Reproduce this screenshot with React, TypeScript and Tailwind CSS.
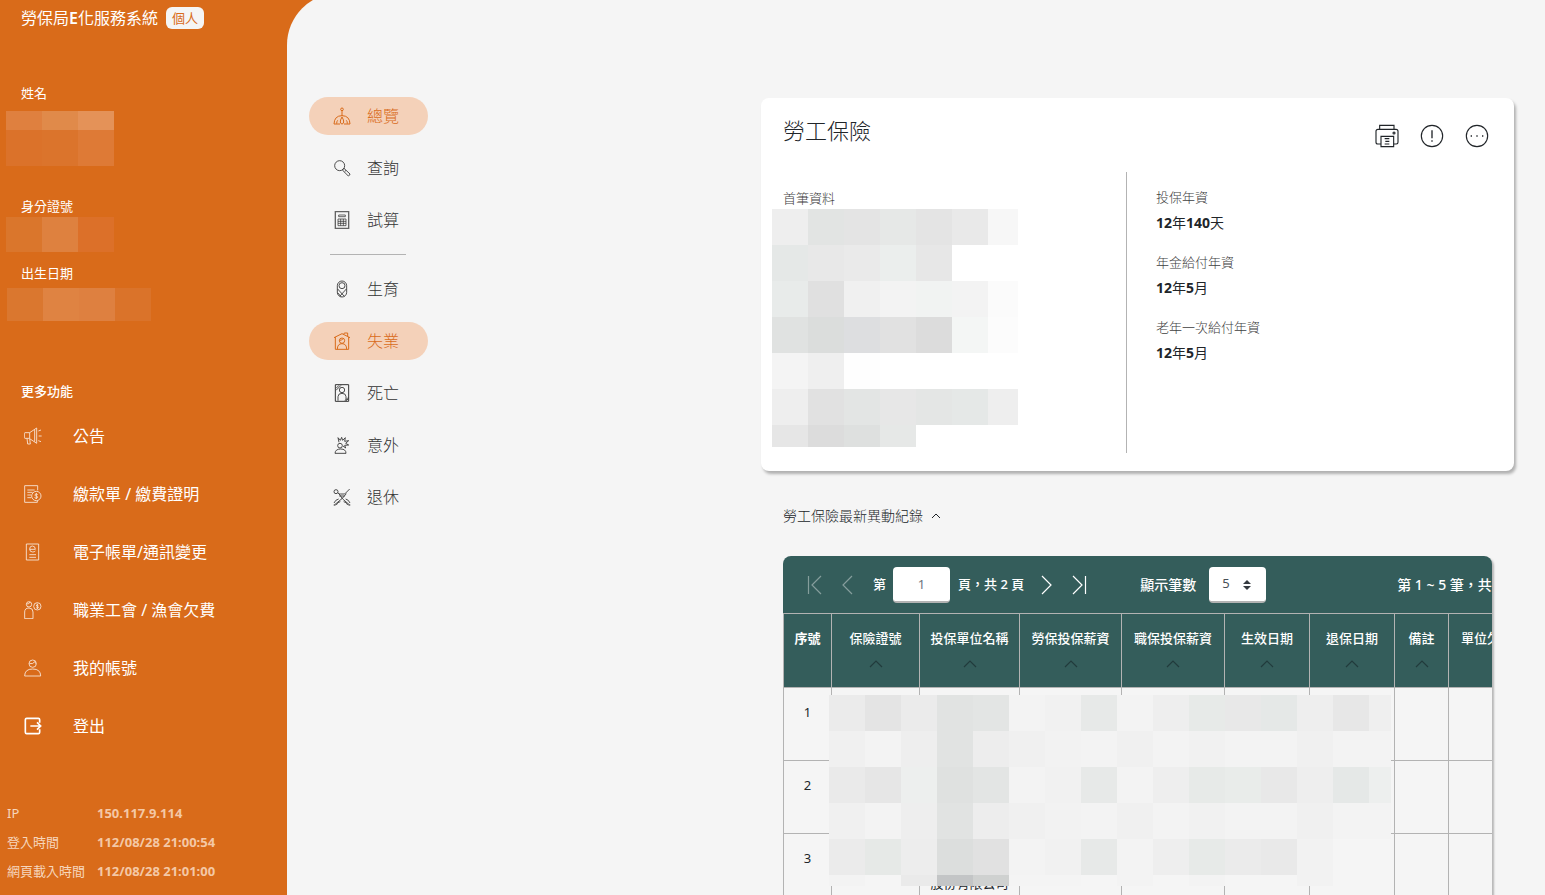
import type { ReactNode } from "react";

interface IconProps {
  children: ReactNode;
  width?: number;
}

// 線條圖示共用外框
function LineIcon({ children, width = 2.6 }: IconProps) {
  return (
    <svg
      viewBox="0 0 54 54"
      className="size-[18px] shrink-0"
      fill="none"
      stroke="currentColor"
      strokeWidth={width}
      aria-hidden="true"
    >
      {children}
    </svg>
  );
}

interface MosaicProps {
  rows: string[];
  className: string;
}

// 個資遮罩，每格 36px，顏色以空白分隔
function Mosaic({ rows, className }: MosaicProps) {
  return (
    <div className={`flex flex-col overflow-hidden ${className}`}>
      {rows.map((row, i) => (
        <div key={i} className="flex h-9 shrink-0">
          {row.split(" ").map((color, j) => (
            <div key={j} className="w-9 shrink-0" style={{ backgroundColor: `#${color}` }} />
          ))}
        </div>
      ))}
    </div>
  );
}

const NAME_MASK = ["df803f e08a4a e49258", "db722a db742c de7a36"];
const ID_MASK = ["da762c de813f dc7029"];
const BIRTH_MASK = ["da772f df8342 de8040 da732a"];

const CARD_MASK = [
  "eeeeee e2e4e3 e4e4e4 e6e8e7 e4e4e4 e9e9e9 f7f7f7",
  "e5e8e7 e8e8e8 eaeaea ebeeed e7e7e7 ffffff ffffff",
  "e8ebea e0e0e0 f0f0f0 f3f3f3 f1f3f2 f3f3f3 fbfbfb",
  "e0e2e1 dbdddc dddee0 e1e1e1 dcdcdc f4f6f5 fcfcfc",
  "f4f4f4 efefef fefefe ffffff ffffff ffffff ffffff",
  "eeeeee e1e1e1 e3e5e4 e7e7e7 e4e6e5 e5e8e7 eeeeee",
  "e6e6e6 dcdcdc dee0df e6e8e7 ffffff ffffff ffffff",
];

const TABLE_MASK = [
  "ebebeb e4e4e4 ebebeb e1e3e2 e3e5e4 f3f3f3 f1f1f1 e7e9e8 f3f3f3 eeeeee e7eae8 e8e8e8 e5e8e7 eeeeee e7e7e7 efefef",
  "f0f0f0 f3f3f3 eeeeee e1e3e2 ededed f0f0f0 f2f2f2 f3f3f3 f0f0f0 f3f3f3 f1f1f1 f3f3f3 f3f3f3 f0f0f0 f3f3f3 f3f3f3",
  "eaeaea e6e6e6 edefee dfe1e0 e3e5e4 f3f3f3 f1f1f1 e7e9e8 f3f3f3 eeeeee e7eae8 e9ecea e8e8e8 eeeeee e5e8e7 edefee",
  "f0f0f0 f3f3f3 eeeeee e1e3e2 ededed f0f0f0 f2f2f2 f3f3f3 f0f0f0 f3f3f3 f1f1f1 f3f3f3 f3f3f3 f0f0f0 f3f3f3 f3f3f3",
  "ebebeb e6e9e7 ededed dcdedd e1e1e1 f3f3f3 f1f1f1 e7e9e8 f3f3f3 eeeeee e7eae8 ebebeb e9e9e9 f2f2f2 f5f5f5 f5f5f5",
  "f3f3f3 f5f5f5 eaeaea c3c5c6 cfd1d0 f4f4f4 f4f4f4 f5f5f5 f3f3f3 f5f5f5 f3f3f3 f5f5f5 f5f5f5 f2f2f2 f5f5f5 f5f5f5",
];

const MORE_LINKS: { label: string; icon: ReactNode }[] = [
  {
    label: "公告",
    icon: (
      <LineIcon>
        <path d="M17 17H3q-2 0-2 3v11q0 3 2 3h14zM17 17 38 3v46L17 35M32 8v36M9 34l2 17h8l-2-16M43 12l8-3M44 27h9M43 41l8 3" />
      </LineIcon>
    ),
  },
  {
    label: "繳款單 / 繳費證明",
    icon: (
      <LineIcon>
        <path d="M41 16V2H2v50h38v-4M10 15h22M10 22h16M10 30h11M10 38h12" />
        <circle cx="37" cy="33" r="14" />
        <path d="M41 29q-2-3-5-2-4 1-3 4 1 2 4 2 4 1 4 4-1 3-5 3-3 0-4-3M37 24v18" />
      </LineIcon>
    ),
  },
  {
    label: "電子帳單/通訊變更",
    icon: (
      <LineIcon>
        <path d="M7 3h37v48H7zM16 35h20M16 43h20M17 19h17q0-10-9-10-8 0-8 9 0 9 9 9 5 0 8-3" />
      </LineIcon>
    ),
  },
  {
    label: "職業工會 / 漁會欠費",
    icon: (
      <LineIcon>
        <circle cx="15" cy="10" r="8" />
        <path d="M8 9q8 1 10-6M2 53V33q0-12 13-12 12 0 12 12v20z" />
        <circle cx="40" cy="16" r="11" />
        <path d="M43 13q-2-3-5-1-2 3 2 4 4 1 3 4-3 3-6 0M40 8v16" />
      </LineIcon>
    ),
  },
  {
    label: "我的帳號",
    icon: (
      <LineIcon>
        <circle cx="26" cy="14" r="11" />
        <path d="M16 14q12 2 16-6 1 4 4 6M2 51q0-21 24-21t24 21z" />
      </LineIcon>
    ),
  },
  {
    label: "登出",
    icon: (
      <LineIcon width={5}>
        <path d="M47 17V8q0-4-4-4H8Q4 4 4 8v38q0 4 4 4h35q4 0 4-4v-9M19 27h31M39 16l11 11-11 11" />
      </LineIcon>
    ),
  },
];

const MENU_TOP: { label: string; active?: boolean; icon: ReactNode }[] = [
  {
    label: "總覽",
    active: true,
    icon: (
      <LineIcon width={3}>
        <circle cx="27" cy="7" r="4" />
        <path d="M27 11v16M3 51q1-25 24-25t24 25H33M3 51h18M11 50q0-7 3-10M43 50q0-7-3-10M27 30q-6 10-5 15 1 6 5 6t5-6q1-5-5-15" />
      </LineIcon>
    ),
  },
  {
    label: "查詢",
    icon: (
      <LineIcon>
        <circle cx="20" cy="20" r="15" />
        <path d="m30 31 3-3 18 17q0 4-5 6L30 35zM35 38l4-4" />
      </LineIcon>
    ),
  },
  {
    label: "試算",
    icon: (
      <LineIcon width={2.2}>
        <path d="M7 2h40v50H7z" strokeWidth="4" opacity="0.75" />
        <path d="M17 12h20v5H17zM15 24h24v20H15zM15 31h24M15 37h24M23 24v20M31 24v20" />
      </LineIcon>
    ),
  },
];

const MENU_BOTTOM: { label: string; active?: boolean; icon: ReactNode }[] = [
  {
    label: "生育",
    icon: (
      <LineIcon>
        <rect x="13" y="3" width="28" height="48" rx="14" />
        <circle cx="27" cy="17" r="9" />
        <path d="M14 27l20 22M40 27 21 48M14 38l10 12" />
      </LineIcon>
    ),
  },
  {
    label: "失業",
    active: true,
    icon: (
      <LineIcon width={3}>
        <path d="M3 17 27 5l24 12M7 15v37h40V15M32 7l2-4h10v10" />
        <circle cx="27" cy="26" r="8" />
        <path d="M19 25q8 1 11-5M13 52q0-17 14-17t14 17" />
      </LineIcon>
    ),
  },
  {
    label: "死亡",
    icon: (
      <LineIcon>
        <path d="M7 2h40v50H7z" strokeWidth="3" />
        <circle cx="27" cy="18" r="8" />
        <path d="M15 50V38q0-10 12-10t12 10v12M9 13 18 4M9 19 24 4M36 50l10-10M40 50l6-6" />
      </LineIcon>
    ),
  },
  {
    label: "意外",
    icon: (
      <LineIcon>
        <circle cx="21" cy="29" r="7" />
        <path d="M6 52q1-13 17-13t16 13zM18 19 15 5l7 8 4-9 3 9 8-8-2 11 12-2-9 8 9 5-12 1 3 8-8-6" />
      </LineIcon>
    ),
  },
  {
    label: "退休",
    icon: (
      <LineIcon>
        <circle cx="9" cy="11" r="6" />
        <path d="M15 15q4 4 8 3h12L50 3M17 16l12 17L50 51M4 51l24-20 12-14M19 24h16M3 45q4-10 14-12M51 45q-4-10-13-12M10 51q3-9 12-10M44 51q-3-9-12-10M2 51h6M46 51h6" />
      </LineIcon>
    ),
  },
];

const SYSTEM_INFO = [
  ["IP", "150.117.9.114"],
  ["登入時間", "112/08/28 21:00:54"],
  ["網頁載入時間", "112/08/28 21:01:00"],
];

const SENIORITY = [
  ["投保年資", "12年140天"],
  ["年金給付年資", "12年5月"],
  ["老年一次給付年資", "12年5月"],
];

const COLUMNS = [
  { label: "序號", width: "w-12", sortable: false },
  { label: "保險證號", width: "w-[88px]", sortable: true },
  { label: "投保單位名稱", width: "w-[100px]", sortable: true },
  { label: "勞保投保薪資", width: "w-[102px]", sortable: true },
  { label: "職保投保薪資", width: "w-[103px]", sortable: true },
  { label: "生效日期", width: "w-[85px]", sortable: true },
  { label: "退保日期", width: "w-[85px]", sortable: true },
  { label: "備註", width: "w-[54px]", sortable: true },
  { label: "單位欠費註記", width: "w-[102px]", sortable: true },
];

function MenuItem({ label, active, icon }: { label: string; active?: boolean; icon: ReactNode }) {
  return (
    <a
      href="#"
      className={`flex h-[38px] items-center gap-4 rounded-full pl-6 text-base font-light ${
        active ? "bg-[#f4d1b9] text-[#d96b1a]" : "text-[#333333]"
      }`}
    >
      {icon}
      {label}
    </a>
  );
}

function Sidebar() {
  return (
    <aside className="flex w-[287px] shrink-0 flex-col text-white">
      <h1 className="flex items-center gap-2 pt-1.5 pl-[21px] text-base leading-6 font-normal">
        <span>
          勞保局<b className="font-semibold">E</b>化服務系統
        </span>
        <span className="rounded-md bg-[#f5f5f5] px-1.5 text-[13px] leading-[22px] text-[#d96b1a]">
          個人
        </span>
      </h1>

      <div className="mt-[53px] text-[13px] leading-5">
        <p className="pl-[21px]">姓名</p>
        <Mosaic rows={NAME_MASK} className="mt-2 ml-1.5 h-[55px] w-[108px] justify-end" />
        <p className="mt-[30px] pl-[21px]">身分證號</p>
        <Mosaic rows={ID_MASK} className="mt-px ml-1.5 h-[35px] w-[108px]" />
        <p className="mt-[11px] pl-[21px]">出生日期</p>
        <Mosaic rows={BIRTH_MASK} className="mt-[5px] ml-[7px] h-[33px] w-36" />
      </div>

      <h2 className="mt-[60px] pl-[21px] text-[13px] leading-5 font-medium">更多功能</h2>
      <nav className="mt-1.5">
        {MORE_LINKS.map(({ label, icon }) => (
          <a key={label} href="#" className="flex h-[58px] items-center gap-[31px] pl-6 text-base">
            <span className={label === "登出" ? "" : "opacity-85"}>{icon}</span>
            {label}
          </a>
        ))}
      </nav>

      <dl className="mt-auto pb-[9px] pl-[7px] text-[13px] leading-[29px] text-[#f6d6bd]">
        {SYSTEM_INFO.map(([term, value]) => (
          <div key={term} className="flex">
            <dt className="w-[90px]">{term}</dt>
            <dd className="font-bold text-[#f4c8a6]">{value}</dd>
          </div>
        ))}
      </dl>
    </aside>
  );
}

function InsuranceCard() {
  return (
    <section className="rounded-lg bg-white pt-5 pb-[18px] shadow-[2px_3px_3px_rgba(0,0,0,0.28)]">
      <header className="flex items-start justify-between pr-[25px] pl-[22px]">
        <h2 className="text-[22px] leading-6 font-light text-[#212529]">勞工保險</h2>
        <div className="flex gap-[21px] pt-1.5 text-[#212529]">
          <button type="button" aria-label="列印">
            <svg viewBox="0 0 72 72" className="size-6" fill="none" stroke="currentColor" strokeWidth="3.4">
              <path d="M14 16V4h43v12M18 60H8q-5 0-5-5V22q0-6 6-6h54q6 0 6 6v33q0 5-5 5h-8" />
              <path d="M18 37h38v31H18zM29 44h14M31 52h12M29 60h14" />
              <circle cx="57" cy="27" r="3" />
            </svg>
          </button>
          <button type="button" aria-label="說明">
            <svg viewBox="0 0 72 72" className="size-6" fill="none" stroke="currentColor" strokeWidth="3.4">
              <circle cx="36" cy="36" r="32" />
              <path d="M36 19v24M36 49v4" strokeWidth="4" />
            </svg>
          </button>
          <button type="button" aria-label="更多">
            <svg viewBox="0 0 72 72" className="size-6" fill="none" stroke="currentColor" strokeWidth="3.4">
              <circle cx="36" cy="36" r="32" />
              <path d="M17 36h4M34 36h4M51 36h4" strokeWidth="4" />
            </svg>
          </button>
        </div>
      </header>

      <div className="mt-6 flex">
        <div className="w-[365px] shrink-0 pt-4">
          <p className="pl-[22px] text-[13px] leading-5 font-light text-[#404040]">首筆資料</p>
          <Mosaic rows={CARD_MASK} className="mt-px ml-[11px] h-[238px] w-[246px]" />
        </div>
        <dl className="flex h-[281px] flex-1 flex-col gap-[17px] border-l border-[#b3b3b3] pt-[15px] pl-[29px]">
          {SENIORITY.map(([term, value]) => (
            <div key={term}>
              <dt className="text-[13px] leading-5 font-light text-[#404040]">{term}</dt>
              <dd className="pt-[3px] text-sm leading-[25px] font-bold text-[#212529]">
                {value.split(/(\d+)/).map((part, i) =>
                  /\d/.test(part) ? part : <span key={i} className="font-normal">{part}</span>
                )}
              </dd>
            </div>
          ))}
        </dl>
      </div>
    </section>
  );
}

function Pager() {
  return (
    <div className="flex h-[57px] items-center pl-6 text-[13px] font-medium whitespace-nowrap text-white">
      <button type="button" aria-label="第一頁" className="opacity-40">
        <svg viewBox="0 0 16 20" className="h-5 w-4" fill="none" stroke="currentColor" strokeWidth="1.2">
          <path d="M1.500 1v18M14 1 5 10l9 9" />
        </svg>
      </button>
      <button type="button" aria-label="上一頁" className="ml-[18px] opacity-40">
        <svg viewBox="0 0 12 20" className="h-5 w-3" fill="none" stroke="currentColor" strokeWidth="1.2">
          <path d="m11 1-9 9 9 9" />
        </svg>
      </button>
      <label htmlFor="page" className="mr-[7px] ml-5">第</label>
      <input
        id="page"
        defaultValue="1"
        className="h-9 w-[57px] shrink-0 rounded border-b-2 border-[#b3b3b3] bg-white text-center font-normal text-[#6c757d]"
      />
      <span className="ml-2">頁，共 2 頁</span>
      <button type="button" aria-label="下一頁" className="ml-[17px]">
        <svg viewBox="0 0 12 20" className="h-5 w-3" fill="none" stroke="currentColor" strokeWidth="1.2">
          <path d="m1 1 9 9-9 9" />
        </svg>
      </button>
      <button type="button" aria-label="最末頁" className="ml-[19px]">
        <svg viewBox="0 0 16 20" className="h-5 w-4" fill="none" stroke="currentColor" strokeWidth="1.2">
          <path d="m1 1 9 9-9 9M13.500 1v18" />
        </svg>
      </button>
      <label htmlFor="page-size" className="ml-[52px] text-sm">顯示筆數</label>
      <div className="relative ml-[13px]">
        <select
          id="page-size"
          defaultValue="5"
          className="block h-9 w-[57px] appearance-none rounded border-b-2 border-[#b3b3b3] bg-white pl-[13px] font-normal text-[#495057]"
        >
          <option>5</option>
          <option>10</option>
        </select>
        <svg viewBox="0 0 8 10" className="pointer-events-none absolute top-[13px] right-[15px] h-2.5 w-2" fill="#343a40">
          <path d="M4 0 8 4H0zM4 10 0 6h8z" />
        </svg>
      </div>
      <span className="ml-[131px] text-sm">第 1 ~ 5 筆，共 10 筆</span>
    </div>
  );
}

function RecordTable() {
  return (
    <div className="relative overflow-hidden rounded-t-lg bg-[#345d5b] shadow-[2px_2px_2px_rgba(0,0,0,0.25)]">
      <Pager />
      <table className="w-[767px] table-fixed border-collapse bg-[#f5f5f5] text-[13px] leading-[26px]">
        <thead>
          <tr className="h-[74px] bg-[#345d5b] text-white">
            {COLUMNS.map(({ label, width, sortable }) => (
              <th
                key={label}
                className={`border border-[#b3b3b3] px-0 pt-[11px] align-top whitespace-nowrap ${width} ${
                  sortable ? "font-medium" : "font-bold"
                } ${label === "單位欠費註記" ? "px-3" : ""}`}
              >
                {label}
                {sortable && (
                  <svg
                    viewBox="0 0 14 8"
                    className="mx-auto mt-[9px] h-2 w-3.5"
                    fill="none"
                    stroke="#213b3c"
                    strokeWidth="1.2"
                  >
                    <path d="m1 7 6-6 6 6" />
                  </svg>
                )}
              </th>
            ))}
          </tr>
        </thead>
        <tbody className="text-center text-[#212529]">
          {[1, 2, 3, 4, 5].map((row) => (
            <tr key={row} className="h-[73px]">
              {COLUMNS.map(({ label }, col) => (
                <td key={label} className="border border-[#b3b3b3] pt-[11px] align-top whitespace-nowrap">
                  {col === 0 && row}
                  {col === 2 && row === 3 && <span className="block pt-[25px]">股份有限公司</span>}
                </td>
              ))}
            </tr>
          ))}
        </tbody>
      </table>
      <Mosaic rows={TABLE_MASK} className="absolute top-[139px] left-[46px] h-[191px] w-[562px]" />
    </div>
  );
}

export default function App() {
  return (
    <div
      lang="zh-Hant-TW"
      className="flex h-screen overflow-hidden bg-[#d96b1a] font-['Noto_Sans','Noto_Sans_CJK_TC',sans-serif]"
    >
      <Sidebar />
      <main className="-mt-[7px] flex min-w-0 flex-1 rounded-tl-[52px] bg-[#f5f5f5] pt-[104px] pr-[31px] pl-[22px]">
        <nav className="mr-[333px] flex w-[119px] shrink-0 flex-col gap-3.5">
          {MENU_TOP.map((item) => (
            <MenuItem key={item.label} {...item} />
          ))}
          <hr className="my-px mr-[22px] ml-[21px] border-[#b3b3b3]" />
          {MENU_BOTTOM.map((item) => (
            <MenuItem key={item.label} {...item} />
          ))}
        </nav>

        <div className="min-w-0 flex-1 pt-px">
          <InsuranceCard />
          <div className="px-[22px]">
            <h3 className="pt-[35px] pb-[30px] text-sm leading-5 font-light text-[#212529]">
              <button type="button" className="flex items-center gap-2">
                勞工保險最新異動紀錄
                <svg viewBox="0 0 10 6" className="h-1.5 w-2.5" fill="none" stroke="currentColor">
                  <path d="m1 5 4-4 4 4" />
                </svg>
              </button>
            </h3>
            <RecordTable />
          </div>
        </div>
      </main>
    </div>
  );
}
